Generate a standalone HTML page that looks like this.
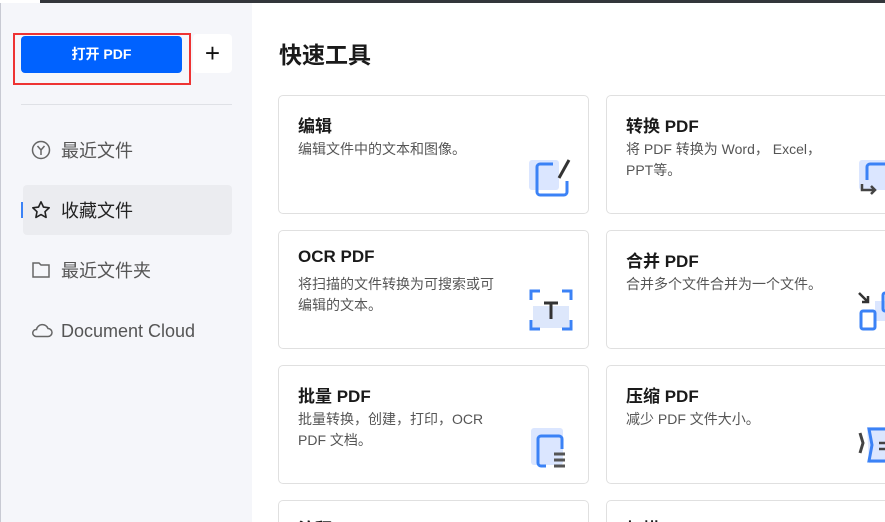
<!DOCTYPE html>
<html><head><meta charset="utf-8"><style>
*{margin:0;padding:0;box-sizing:border-box}
html,body{width:885px;height:522px;overflow:hidden}
body{background:#fff;font-family:"Liberation Sans","Noto Sans CJK SC",sans-serif}
#w{position:relative;width:885px;height:522px;overflow:hidden}
.topbar{position:absolute;left:40px;top:0;width:845px;height:3px;background:#33363b}
.side{position:absolute;left:0;top:3px;width:252px;height:519px;background:#f5f6fa;border-left:1px solid #c8cad3}
.btn{position:absolute;left:21px;top:36px;width:161px;height:37px;background:#0062ff;border-radius:4px;color:#fff;font-size:14px;font-weight:bold;text-align:center;line-height:37px}
.red{position:absolute;left:13px;top:33px;width:178px;height:52px;border:2px solid #ee3333}
.plus{position:absolute;left:193px;top:34px;width:39px;height:39px;background:#fff;border-radius:4px;text-align:center;line-height:38px;font-size:26px;color:#111}
.div{position:absolute;left:21px;top:104px;width:211px;height:1px;background:#dfe1e6}
.nav{position:absolute;left:61px;font-size:18px;color:#555;line-height:24px}
.ic{position:absolute;left:31px}
.sel{position:absolute;left:23px;top:185px;width:209px;height:50px;background:#ebecf0;border-radius:4px}
.mark{position:absolute;left:21px;top:202px;width:2px;height:16px;background:#3b82f6}
h1{position:absolute;left:279px;top:36px;font-size:23px;font-weight:bold;color:#1a1a1a}
.card{position:absolute;width:311px;height:119px;border:1px solid #e0e0e0;border-radius:5px;background:#fff;overflow:hidden}
.card b{position:absolute;left:19px;top:16px;font-size:17px;color:#1a1a1a}
.card p{position:absolute;left:19px;top:43px;width:205px;font-size:14px;line-height:21px;color:#555}
.card svg{position:absolute}
.bot{height:22px;border-bottom:none;border-radius:5px 5px 0 0}
.bot b{top:14px}
</style></head><body><div id="w">
<div class="topbar"></div>
<div class="side"></div>
<div class="btn">打开 PDF</div>
<div class="red"></div>
<div class="plus">+</div>
<div class="div"></div>
<svg class="ic" style="top:140px" width="20" height="20" viewBox="0 0 20 20"><circle cx="10" cy="10" r="8.5" fill="none" stroke="#666" stroke-width="1.5"/><path d="M6.5 6l3.5 4 3.5-4M10 10v5" fill="none" stroke="#666" stroke-width="1.5"/></svg>
<div class="nav" style="top:139px">最近文件</div>
<div class="sel"></div><div class="mark"></div>
<svg class="ic" style="top:200px" width="20" height="20" viewBox="0 0 20 20"><path d="M10 1.8l2.5 5.3 5.7.7-4.2 3.9 1.1 5.7L10 14.6l-5.1 2.8 1.1-5.7L1.8 7.8l5.7-.7z" fill="none" stroke="#222" stroke-width="1.6" stroke-linejoin="round"/></svg>
<div class="nav" style="top:199px;color:#222">收藏文件</div>
<svg class="ic" style="top:261px" width="20" height="18" viewBox="0 0 20 18"><path d="M2 2h6l2 2h8v12H2z" fill="none" stroke="#666" stroke-width="1.5"/></svg>
<div class="nav" style="top:259px">最近文件夹</div>
<svg class="ic" style="top:322px" width="22" height="16" viewBox="0 0 22 16"><path d="M5 14.5h12a4 4 0 0 0 0-8 6 6 0 0 0-11.5 1A3.5 3.5 0 0 0 5 14.5z" fill="none" stroke="#666" stroke-width="1.5"/></svg>
<div class="nav" style="top:319px">Document Cloud</div>

<h1>快速工具</h1>

<div class="card" style="left:278px;top:95px"><b>编辑</b><p>编辑文件中的文本和图像。</p>
<svg style="left:250px;top:58px" width="46" height="46" viewBox="0 0 46 46"><rect x="0" y="6" width="30" height="30" rx="3" fill="#dbe6ff"/><path d="M24 10H11a3 3 0 0 0-3 3v25a3 3 0 0 0 3 3h24a3 3 0 0 0 3-3V27" fill="none" stroke="#3b82f6" stroke-width="3"/><path d="M30 24l10-18" stroke="#333" stroke-width="3"/></svg></div>
<div class="card" style="left:606px;top:95px;width:290px"><b>转换 PDF</b><p>将 PDF 转换为 Word， Excel，PPT等。</p>
<svg style="left:250px;top:58px" width="40" height="46" viewBox="0 0 40 46"><rect x="2" y="6" width="30" height="30" rx="3" fill="#dbe6ff"/><path d="M10 26V13a3 3 0 0 1 3-3h20" fill="none" stroke="#3b82f6" stroke-width="3"/><path d="M5 30v6h12M14 32l4 4-4 4" fill="none" stroke="#444" stroke-width="2.5"/></svg></div>

<div class="card" style="left:278px;top:230px"><b>OCR PDF</b><p>将扫描的文件转换为可搜索或可编辑的文本。</p>
<svg style="left:250px;top:57px" width="44" height="44" viewBox="0 0 44 44"><rect x="4" y="18" width="36" height="22" fill="#dde7fb"/><path d="M2 12V3h9M33 3h9v9M42 32v9h-9M11 41H2v-9" fill="none" stroke="#3b82f6" stroke-width="3"/><path d="M15 15h14M22 15v16" stroke="#333" stroke-width="3"/></svg></div>
<div class="card" style="left:606px;top:230px;width:290px"><b>合并 PDF</b><p>合并多个文件合并为一个文件。</p>
<svg style="left:250px;top:58px" width="40" height="44" viewBox="0 0 40 44"><rect x="18" y="12" width="22" height="20" fill="#dbe6ff"/><rect x="4" y="22" width="14" height="18" rx="2" fill="none" stroke="#3b82f6" stroke-width="3"/><rect x="26" y="4" width="14" height="18" rx="2" fill="none" stroke="#3b82f6" stroke-width="3"/><path d="M2 4l9 9M5 13h6V7" fill="none" stroke="#333" stroke-width="2.5"/></svg></div>

<div class="card" style="left:278px;top:365px"><b>批量 PDF</b><p>批量转换，创建，打印，OCR PDF 文档。</p>
<svg style="left:250px;top:58px" width="44" height="46" viewBox="0 0 44 46"><rect x="2" y="4" width="32" height="37" rx="3" fill="#dbe6ff"/><path d="M17 42h-5a3 3 0 0 1-3-3V15a3 3 0 0 1 3-3h18a3 3 0 0 1 3 3v10" fill="none" stroke="#3b82f6" stroke-width="3"/><path d="M25 30h11M25 36h11M25 42h11" stroke="#555" stroke-width="3"/></svg></div>
<div class="card" style="left:606px;top:365px;width:290px"><b>压缩 PDF</b><p>减少 PDF 文件大小。</p>
<svg style="left:250px;top:55px" width="40" height="48" viewBox="0 0 40 48"><path d="M10 6h30v36H12z" fill="#dbe6ff"/><path d="M40 8H12l3 16-3 16h28" fill="none" stroke="#3b82f6" stroke-width="3"/><path d="M3 12l3 10-3 10" fill="none" stroke="#444" stroke-width="3"/><path d="M22 22h6M22 28h6" stroke="#444" stroke-width="2.5"/></svg></div>

<div class="card bot" style="left:278px;top:500px"><b>注释</b></div>
<div class="card bot" style="left:606px;top:500px;width:290px"><b>扫描</b></div>
</div></body></html>
